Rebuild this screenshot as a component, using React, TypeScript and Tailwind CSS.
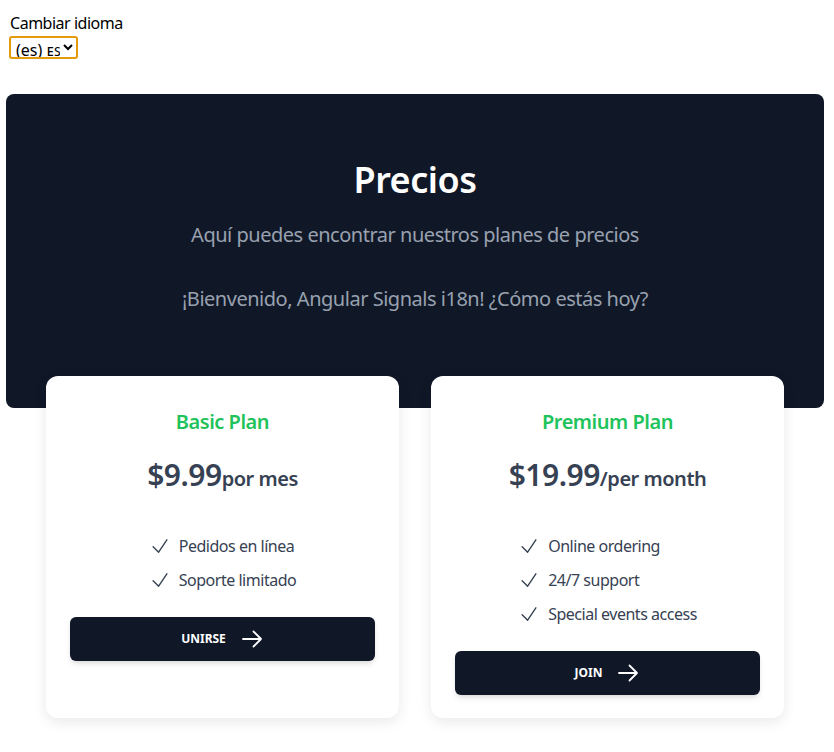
import React from "react";

type Plan = {
  name: string;
  price: string;
  period: string;
  features: string[];
  cta: string;
};

const plans: Plan[] = [
  {
    name: "Basic Plan",
    price: "$9.99",
    period: "por mes",
    features: ["Pedidos en línea", "Soporte limitado"],
    cta: "Unirse",
  },
  {
    name: "Premium Plan",
    price: "$19.99",
    period: "/per month",
    features: ["Online ordering", "24/7 support", "Special events access"],
    cta: "Join",
  },
];

function CheckIcon() {
  return (
    <svg
      viewBox="0 0 24 24"
      fill="none"
      stroke="currentColor"
      strokeWidth={1.5}
      strokeLinecap="round"
      strokeLinejoin="round"
      className="h-[22px] w-[22px] shrink-0 text-gray-700"
    >
      <path d="m4.5 12.75 6 6 9-13.5" />
    </svg>
  );
}

function ArrowIcon() {
  return (
    <svg
      viewBox="0 0 24 24"
      fill="none"
      stroke="currentColor"
      strokeWidth={1.8}
      strokeLinecap="round"
      strokeLinejoin="round"
      className="h-6 w-6"
    >
      <path d="M13.5 4.5 21 12m0 0-7.5 7.5M21 12H3" />
    </svg>
  );
}

function PlanCard({ plan }: { plan: Plan }) {
  return (
    <div className="flex flex-col rounded-xl bg-white px-6 pt-8 pb-[23px] text-center shadow-[0_4px_14px_rgba(0,0,0,0.09)]">
      <h2 className="text-xl leading-7 font-semibold text-[#1fc35c]">{plan.name}</h2>
      <p className="mt-[21px] leading-9 font-semibold text-gray-700">
        <span className="text-3xl">{plan.price}</span>
        <span className="text-xl">{plan.period}</span>
      </p>
      <ul className="mx-auto mt-[36px] flex w-fit flex-col items-start gap-[10px]">
        {plan.features.map((f) => (
          <li key={f} className="flex items-center gap-2 text-base leading-6 text-gray-700">
            <CheckIcon />
            <span className="whitespace-nowrap">{f}</span>
          </li>
        ))}
      </ul>
      <button
        type="button"
        className="mt-[25px] flex h-11 w-full items-center justify-center gap-[14px] rounded-md bg-gray-900 text-xs font-bold tracking-normal uppercase text-white shadow-md"
      >
        {plan.cta}
        <ArrowIcon />
      </button>
    </div>
  );
}

export default function App() {
  return (
    <div className="min-h-screen bg-white font-['Noto_Sans',sans-serif] tracking-[-0.03em] text-black">
      <div className="pt-[11px] pl-[10px]">
        <label className="block text-base leading-6">Cambiar idioma</label>
        <select
          defaultValue="es"
          className="mt-[1px] -ml-[1px] block h-[23px] w-[69px] rounded-[3px] border-2 border-[#e39a0b] bg-white pl-[1px] text-[16px] leading-none tracking-normal outline-none"
        >
          <option value="es">(es) ᴇꜱ</option>
          <option value="en">(en) ᴇɴ</option>
        </select>
      </div>

      <section className="mt-[35px] mr-[10px] ml-[6px] rounded-lg bg-gray-900 pt-[66px] pb-[95px] text-center">
        <h1 className="text-4xl leading-10 font-semibold text-white">Precios</h1>
        <p className="mt-[21px] text-xl leading-7 text-gray-400">
          Aquí puedes encontrar nuestros planes de precios
        </p>
        <p className="mt-[36px] text-xl leading-7 text-gray-400">
          ¡Bienvenido, Angular Signals i18n! ¿Cómo estás hoy?
        </p>
      </section>

      <div className="-mt-8 mr-[50px] ml-[46px] grid grid-cols-2 gap-8">
        {plans.map((p) => (
          <PlanCard key={p.name} plan={p} />
        ))}
      </div>
    </div>
  );
}
